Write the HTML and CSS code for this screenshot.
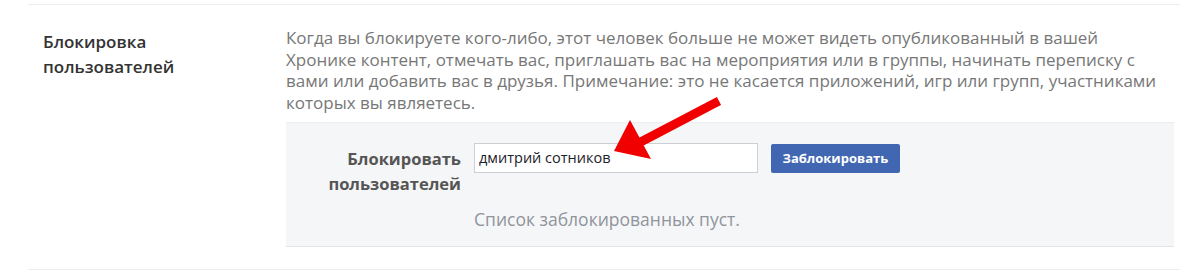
FILE: index.html
```html
<!DOCTYPE html>
<html>
<head>
    <title>Блокировка пользователей</title>
    <link rel="stylesheet" href="styles.css">
</head>
<body>
    <div class="section">
        <h3 class="section-title">Блокировка пользователей</h3>
        <div class="section-body">
            <p class="desc">Когда вы блокируете кого-либо, этот человек больше не может видеть опубликованный в вашей<br>
                Хронике контент, отмечать вас, приглашать вас на мероприятия или в группы, начинать переписку с<br>
                вами или добавить вас в друзья. Примечание: это не касается приложений, игр или групп, участниками<br>
                которых вы являетесь.</p>

            <div class="panel">
                <div class="block-row">
                    <label class="block-label" for="blockInput">Блокировать пользователей</label>
                    <input type="text" id="blockInput" class="block-input" value="дмитрий сотников">
                    <button type="button" class="block-btn">Заблокировать</button>
                </div>
                <p class="empty-list">Список заблокированных пуст.</p>

                <!-- red annotation arrow -->
                <svg class="arrow" width="130" height="80" viewBox="0 0 130 80">
                    <line x1="118" y1="9" x2="40" y2="50" stroke="#f00000" stroke-width="9" stroke-linecap="square"/>
                    <polygon points="17,57 33,26 54,65" fill="#f00000"/>
                </svg>
            </div>
        </div>
    </div>
</body>
</html>
```

FILE: styles.css
```css
body {
    font-family: 'Open Sans', 'Noto Sans', sans-serif;
    margin: 0;
    padding-top: 4px;
    background-color: #fff;
    color: #333;
}
.section {
    display: flex;
    margin: 0 6px 0 28px;
    padding: 22px 6px 22px 15px;
    border-top: 1px solid #ebedf0;
    border-bottom: 1px solid #ebedf0;
}
.section-title {
    width: 243px;
    flex-shrink: 0;
    margin: 2px 0 0;
    padding-right: 60px;
    box-sizing: border-box;
    font-size: 17px;
    font-weight: 600;
    line-height: 25px;
    color: #333;
}
.section-body {
    flex: 1;
}
.desc {
    margin: 0 0 8px;
    font-size: 17px;
    line-height: 21.7px;
    color: #777;
}
.panel {
    position: relative;
    background-color: #f5f6f7;
    border-top: 1px solid #ebedf0;
    border-bottom: 1px solid #e2e4e7;
    padding: 20px 0 16px;
}
.block-row {
    display: flex;
    align-items: flex-start;
}
.block-label {
    width: 175px;
    padding-top: 3px;
    text-align: right;
    font-size: 16.5px;
    font-weight: 700;
    line-height: 25px;
    color: #555;
}
.block-input {
    width: 284px;
    height: 30px;
    box-sizing: border-box;
    margin-left: 13px;
    padding: 0 4px;
    border: 1px solid #ccd0d5;
    background-color: #fff;
    font-family: inherit;
    font-size: 14.5px;
    color: #1d2129;
}
.block-btn {
    height: 29px;
    margin-left: 13px;
    margin-top: 1px;
    padding: 0 11.5px;
    border: none;
    border-radius: 2px;
    background-color: #4267b2;
    color: #fff;
    font-family: inherit;
    font-size: 13px;
    font-weight: 700;
    cursor: pointer;
}
.empty-list {
    margin: 12px 0 0 188px;
    font-size: 17.5px;
    line-height: 22px;
    color: #90949c;
}
.arrow {
    position: absolute;
    left: 311px;
    top: -29px;
}
```
